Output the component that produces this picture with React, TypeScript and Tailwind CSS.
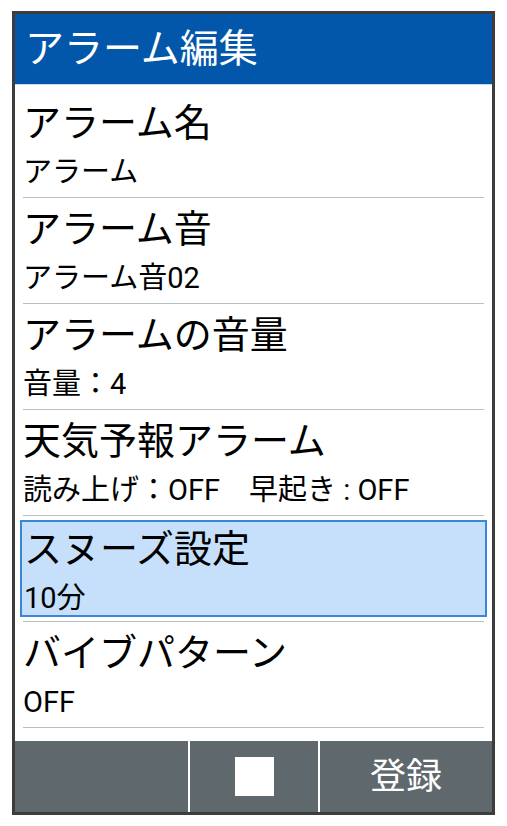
const rows = [
  { title: "アラーム名", value: "アラーム" },
  { title: "アラーム音", value: "アラーム音02" },
  { title: "アラームの音量", value: "音量：4" },
  { title: "天気予報アラーム", value: "読み上げ：OFF　早起き : OFF" },
  { title: "スヌーズ設定", value: "10分", selected: true },
  { title: "バイブパターン", value: "OFF" },
];

function Row({ title, value, selected }: { title: string; value: string; selected?: boolean }) {
  return (
    <div className="h-[106px] flex flex-col">
      <div
        className={
          selected
            ? "flex-1 mx-[5px] mt-[4px] mb-[4px] border-2 border-[#3a86d9] bg-[#c6e0fb] px-[2px] pt-[5px]"
            : "flex-1 px-[8px] pt-[9px]"
        }
      >
        <div className="text-[38px] leading-[44px] text-black">{title}</div>
        <div className="text-[29px] leading-[34px] text-black mt-[10px]">{value}</div>
      </div>
      <div className="mx-[8px] h-px bg-[#b9c0c2]" />
    </div>
  );
}

export default function App() {
  return (
    <div
      className="w-[507px] h-[826px] bg-white pt-[11px] px-[12px]"
      style={{ fontFamily: 'Roboto, "Noto Sans CJK JP", sans-serif' }}
    >
      <div className="w-[483px] h-[804px] border-[3px] border-[#3d3d3d] flex flex-col bg-white">
        {/* Header */}
        <div className="h-[71px] bg-[#0257aa] flex items-center px-[10px] border-b border-[#c9d6e3]">
          <span className="text-white text-[39px] leading-none">アラーム編集</span>
        </div>

        {/* List */}
        <div className="flex-1 flex flex-col pt-[7px]">
          {rows.map((r) => (
            <Row key={r.title} title={r.title} value={r.value} selected={r.selected} />
          ))}
        </div>

        {/* Soft key bar */}
        <div className="h-[71px] bg-[#5f686d] flex">
          <div className="w-[173px]" />
          <div className="w-[2px] bg-white" />
          <div className="w-[128px] flex items-center justify-center">
            <div className="w-[39px] h-[39px] bg-white" />
          </div>
          <div className="w-[2px] bg-white" />
          <div className="flex-1 flex items-center justify-center">
            <span className="text-white text-[36px] leading-none">登録</span>
          </div>
        </div>
      </div>
    </div>
  );
}
